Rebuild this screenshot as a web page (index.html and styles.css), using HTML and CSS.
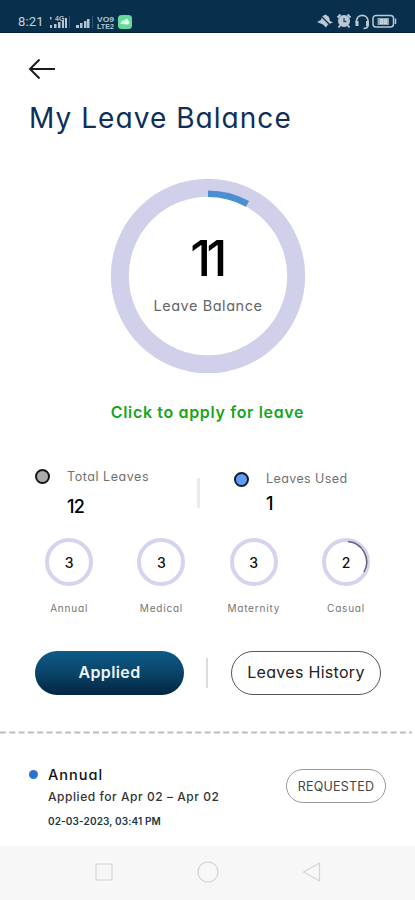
FILE: index.html
```html
<!DOCTYPE html>
<html lang="en">
<head>
<meta charset="utf-8">
<title>My Leave Balance</title>
<link rel="stylesheet" href="styles.css">
</head>
<body>
<div class="screen">
  <header class="status">
    <div class="status-left">
      <span class="time">8:21</span>
      <svg class="signals" width="76" height="16" viewBox="0 0 76 16">
        <g fill="#b5c5d1">
          <path d="M2 3h1.500v2.500h-1.500zM2 11h2v3h-2zM6 10h2.500v4h-2.500zM10 8h2.500v6h-2.500zM14 6h2v8h-2zM17 4h2v10h-2z"/>
          <path d="M28 11h3v3h-3zM32 9h2.500v5h-2.500zM36 7h2.500v7h-2.500zM39 5h2.500v9h-2.500z"/>
          <path d="M21 2h1v12h-1zM44 2h1v12h-1z" opacity=".25"/>
        </g>
        <text x="7" y="6.500" class="tiny">4G</text>
        <text x="49" y="8" class="tiny" textLength="17" lengthAdjust="spacingAndGlyphs">VO9</text>
        <text x="49" y="14.500" class="tiny" textLength="17" lengthAdjust="spacingAndGlyphs">LTE2</text>
      </svg>
      <svg class="app-icon" width="14" height="14" viewBox="0 0 14 14"><rect width="14" height="14" rx="3.5" fill="#63d99a"/><path d="M2.500 9C3 5.500 5.500 5 6.500 6C7 3 10 3 10 5.500C12 6 12 9 10 9.500Z" fill="#e4fff0"/></svg>
    </div>
    <svg class="status-right" width="82" height="18" viewBox="0 0 82 18" fill="none" stroke="#b9c8d4">
      <path d="M1 10L5 8L6 4.500L9.500 2.500L13 5L14 9L17 10.500L12 12.500L10 15.500L7 12.500Z" fill="#b9c8d4" stroke="none"/>
      <path d="M3 2L15 14" stroke="#08304c" stroke-width="1.200"/>
      <circle cx="28" cy="9" r="6" fill="#b9c8d4" stroke="none"/><path d="M21.500 5.500L24.500 2.500M31.500 2.500L34.500 5.500M24 13.500L22.500 15.500M32 13.500L33.500 15.500" stroke-width="2"/><path d="M28 6V9.500H30.500" stroke="#28506b" stroke-width="1.300"/>
      <path d="M40.500 11V8.500A5.800 5.800 0 0 1 52 8.500V13Q52 16.500 47.500 16.500" stroke-width="1.700"/><path d="M41 9V14M51.500 9V14" stroke-width="3"/>
      <rect x="57" y="3.500" width="20.500" height="11.500" rx="3" stroke-width="1.500"/><path d="M79.500 6.500V12" stroke-width="1.500"/><rect x="61.500" y="6" width="11.500" height="7" fill="#8ea4b4" stroke="none"/>
      <text x="63.500" y="12.200" class="battery">88</text>
    </svg>
  </header>

  <main class="content">
    <div class="back">
      <svg width="28" height="22" viewBox="0 0 28 22" fill="none" stroke="#1c1c1c" stroke-width="2"><path d="M27 11H2M11.500 1.500L2 11L11.500 20.500"/></svg>
    </div>
    <h1 class="title">My Leave Balance</h1>

    <div class="gauge">
      <svg width="196" height="196" viewBox="-98 -98 196 196" fill="none">
        <circle r="88.200" stroke="#d1d0eb" stroke-width="18"/>
        <path d="M0 -82.300A82.300 82.300 0 0 1 39.500 -72.200" stroke="#4b8fd2" stroke-width="6.500"/>
      </svg>
      <div class="gauge-label">
        <span class="gauge-value">11</span>
        <span class="gauge-name">Leave Balance</span>
      </div>
    </div>
    <div class="apply">Click to apply for leave</div>

    <section class="stats">
      <div class="stat">
        <i class="dot grey"></i>
        <div><div class="stat-name">Total Leaves</div><div class="stat-value">12</div></div>
      </div>
      <i class="stat-line"></i>
      <div class="stat used">
        <i class="dot blue"></i>
        <div><div class="stat-name">Leaves Used</div><div class="stat-value">1</div></div>
      </div>
    </section>

    <section class="types">
      <div class="type"><div class="ring">3</div><span>Annual</span></div>
      <div class="type"><div class="ring">3</div><span>Medical</span></div>
      <div class="type"><div class="ring">3</div><span>Maternity</span></div>
      <div class="type"><div class="ring">2<svg class="arc" width="48" height="48" viewBox="-24 -24 48 48"><path d="M2 -20.500A20.500 20.500 0 0 1 18 10" fill="none" stroke="#62627e" stroke-width="1.500"/></svg></div><span>Casual</span></div>
    </section>

    <section class="actions">
      <div class="btn primary">Applied</div>
      <i class="btn-line"></i>
      <div class="btn outline">Leaves History</div>
    </section>

    <svg class="dashes" width="415" height="3"><path d="M0 1.500H412" stroke="#bdbdbd" stroke-width="2" stroke-dasharray="6 3.300"/></svg>

    <section class="entry">
      <i class="entry-dot"></i>
      <div class="entry-text">
        <div class="entry-name">Annual</div>
        <div class="entry-range">Applied for Apr 02 – Apr 02</div>
        <div class="entry-date">02-03-2023, 03:41 PM</div>
      </div>
      <div class="badge">REQUESTED</div>
    </section>
  </main>

  <nav class="nav">
    <svg width="24" height="24" viewBox="0 0 24 24"><rect x="4" y="4" width="16" height="16" rx="1"/></svg>
    <svg width="24" height="24" viewBox="0 0 24 24"><circle cx="12" cy="12" r="10"/></svg>
    <svg width="24" height="24" viewBox="0 0 24 24"><path d="M3.500 12L19.500 3V21Z" stroke-linejoin="round"/></svg>
  </nav>
</div>
</body>
</html>
```
FILE: styles.css
```css
* { box-sizing: border-box; }
body { margin: 0; background: #fff; }
i { display: block; flex: none; }
svg { display: block; flex: none; }
.screen {
  width: 415px; height: 900px; display: flex; flex-direction: column; overflow: hidden;
  font-family: Inter, "Liberation Sans", sans-serif; font-feature-settings: "cv11"; color: #111;
  white-space: nowrap;
}
.status {
  height: 33px; background: #08304c; border-bottom: 1px solid #061f3a;
  display: flex; justify-content: space-between; padding: 12px 17px 0 18px; flex: none;
}
.status-left { display: flex; height: 19px; align-items: center; }
.time { font: 400 13px/18px Roboto, sans-serif; color: #c3d0da; width: 30px; letter-spacing: 0.2px; }
.tiny { font: 700 7px "Liberation Sans", sans-serif; fill: #b5c5d1; }
.battery { font: 700 7px "Liberation Sans", sans-serif; fill: #dce5eb; stroke: none; }
.app-icon { margin-left: -6px; }
.content { flex: 1; display: flex; flex-direction: column; }
.back { padding: 25px 0 0 28px; }
.title { margin: 18px 0 0 29px; font-size: 28px; line-height: 40px; font-weight: 400; color: #0d2f58; letter-spacing: 1.050px; }
.gauge { display: grid; justify-content: center; margin-top: 40px; padding-left: 1px; }
.gauge > * { grid-area: 1 / 1; }
.gauge-label { display: flex; flex-direction: column; align-items: center; padding-top: 50px; }
.gauge-value { font-size: 50px; line-height: 60px; font-weight: 500; color: #000; letter-spacing: -4.500px; margin-right: 3px; }
.gauge-name { font-size: 14.500px; line-height: 20px; margin-top: 8px; color: #666; letter-spacing: 0.55px; }
.apply { margin-top: 26px; line-height: 24px; text-align: center; font-size: 16px; font-weight: 600; color: #18a51d; letter-spacing: 0.65px; }
.stats { display: flex; height: 54px; margin-top: 43px; padding-left: 35px; }
.stat { display: flex; width: 162px; gap: 17px; }
.used { padding-top: 2px; margin-left: 34px; }
.dot { width: 15px; height: 15px; border-radius: 50%; border: 2px solid #161616; margin-top: 2px; }
.grey { background: #aaa; }
.blue { background: #5c9dfa; border-color: #101c30; }
.stat-name { font-size: 12.500px; line-height: 20px; color: #707070; letter-spacing: 0.55px; }
.used .dot { margin-top: 3px; }
.stat-value { font-size: 18px; line-height: 24px; font-weight: 500; margin-top: 8px; color: #000; letter-spacing: -0.6px; }
.used .stat-name { letter-spacing: 0.4px; }
.used .stat-value { margin-top: 3px; }
.stat-line { width: 3px; height: 30px; background: #ebebeb; margin-top: 11px; }
.types { display: grid; grid-template-columns: repeat(4, 92.300px); padding-left: 23px; margin-top: 17px; }
.type { display: flex; flex-direction: column; align-items: center; }
.type > span { font-size: 10px; line-height: 14px; margin-top: 15px; color: #747474; letter-spacing: 0.8px; }
.ring { width: 48px; height: 48px; border-radius: 50%; border: 4px solid #d5d3ed; display: grid; place-items: center; font-size: 14px; font-weight: 500; position: relative; }
.arc { position: absolute; left: -4px; top: -4px; }
.actions { display: flex; align-items: center; margin-top: 36px; padding-left: 35px; height: 44px; }
.btn { width: 150px; height: 44px; border-radius: 22px; text-align: center; line-height: 43px; font-size: 16px; }
.primary { width: 149px; background: linear-gradient(#0c5b8a, #0a4468 50%, #032541); color: #edf5fa; font-weight: 600; letter-spacing: 0.4px; }
.btn-line { width: 2px; height: 30px; background: #dcdcdc; margin: 0 23px 0 22px; }
.outline { border: 1px solid #555; line-height: 41px; color: #222; letter-spacing: 0.3px; }
.dashes { margin-top: 36px; }
.entry { display: flex; margin-top: 31px; padding-left: 29px; }
.entry-dot { width: 9px; height: 9px; border-radius: 50%; background: #2b72cf; margin-top: 5px; }
.entry-text { width: 238px; padding-left: 10px; }
.entry-name { font-size: 14.500px; line-height: 20px; font-weight: 500; letter-spacing: 1px; }
.entry-range { font-size: 12px; line-height: 18px; font-weight: 500; color: #333; margin-top: 3px; letter-spacing: 0.55px; }
.entry-date { font-size: 10px; line-height: 16px; font-weight: 600; color: #173846; margin-top: 7px; letter-spacing: 0.12px; }
.badge { margin-left: 10px; margin-top: 4px; width: 100px; height: 34px; border: 1px solid #999; border-radius: 17px; text-align: center; line-height: 33px; font-size: 12.500px; color: #444; letter-spacing: 0.2px; }
.nav { height: 54px; background: #f7f7f7; flex: none; display: flex; gap: 80px; padding: 14px 0 0 92px; }
.nav svg { fill: none; stroke: #d4d4d4; stroke-width: 1.200; }
```
